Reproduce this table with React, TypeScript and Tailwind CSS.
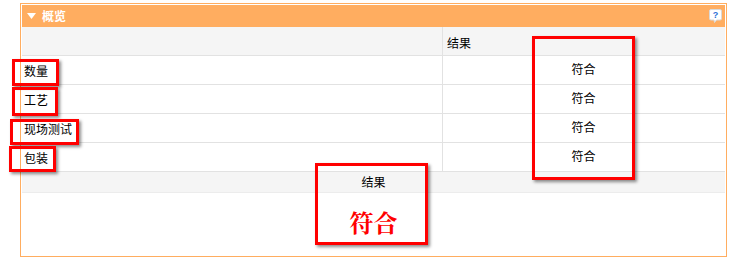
import React from "react";

const rows = ["数量", "工艺", "现场测试", "包装"];

// annotation boxes drawn over the screenshot
const marks = [
  { l: 12, t: 56, w: 47, h: 27 },
  { l: 12, t: 84, w: 46, h: 29 },
  { l: 10, t: 116, w: 69, h: 26 },
  { l: 9, t: 143, w: 47, h: 26 },
  { l: 532, t: 33, w: 103, h: 144 },
  { l: 315, t: 160, w: 113, h: 82 },
];

const App = () => {
  return (
    <div className="relative w-[729px] h-[259px] bg-white font-['Noto_Sans_CJK_SC',sans-serif] text-[12px] text-black">
      <div className="ml-[20px] mt-[3px] w-[707px] h-[254px] border border-[#ffad60] p-px flex flex-col">
        <div className="h-[22px] bg-[#ffad60] flex items-center justify-between pl-[5px] pr-[3px]">
          <div className="flex items-center gap-[6px] text-white font-bold">
            <svg width="9" height="6" viewBox="0 0 9 6">
              <path d="M0 0 L9 0 L4.5 6 Z" fill="#fff" />
            </svg>
            <span className="leading-none">概览</span>
          </div>
          <svg width="13" height="14" viewBox="0 0 13 14">
            <path d="M2 0.5 H11 Q12.5 0.5 12.5 2 V9.5 Q12.5 11 11 11 H7.5 L5.5 13.5 L5 11 H2 Q0.5 11 0.5 9.5 V2 Q0.5 0.5 2 0.5 Z" fill="#fff" stroke="#d9d9d9" />
            <text x="6.5" y="9" textAnchor="middle" fontSize="9" fontWeight="bold" fill="#2a6fd6" fontFamily="Liberation Sans, sans-serif">?</text>
          </svg>
        </div>
        <div className="flex h-[29px] bg-[#f5f5f5] border-b border-[#e2e2e2]">
          <div className="w-[421px] border-r border-[#e2e2e2]" />
          <div className="flex-1 pl-[4px] pt-[3px] flex items-center">结果</div>
        </div>
        {rows.map((r) => (
          <div key={r} className="flex h-[29px] border-b border-[#e2e2e2]">
            <div className="w-[421px] border-r border-[#e2e2e2] pl-[2px] pt-px flex items-center">{r}</div>
            <div className="flex-1 flex items-center justify-center pr-px pb-[3px]">符合</div>
          </div>
        ))}
        <div className="h-[21px] bg-[#f5f5f5] border-b border-[#ececec] flex items-center justify-center">结果</div>
        <div className="flex-1 flex items-start justify-center pt-[17px]">
          <span className="text-[24px] leading-none font-bold text-[#ff0000] font-['Noto_Serif_CJK_SC','Noto_Sans_CJK_SC',serif]">符合</span>
        </div>
      </div>
      {marks.map((m, i) => (
        <div
          key={i}
          className="absolute border-[3px] border-[#ff0000] shadow-[2px_2px_3px_rgba(0,0,0,0.45)]"
          style={{ left: m.l, top: m.t, width: m.w, height: m.h }}
        />
      ))}
    </div>
  );
};

export default App;
